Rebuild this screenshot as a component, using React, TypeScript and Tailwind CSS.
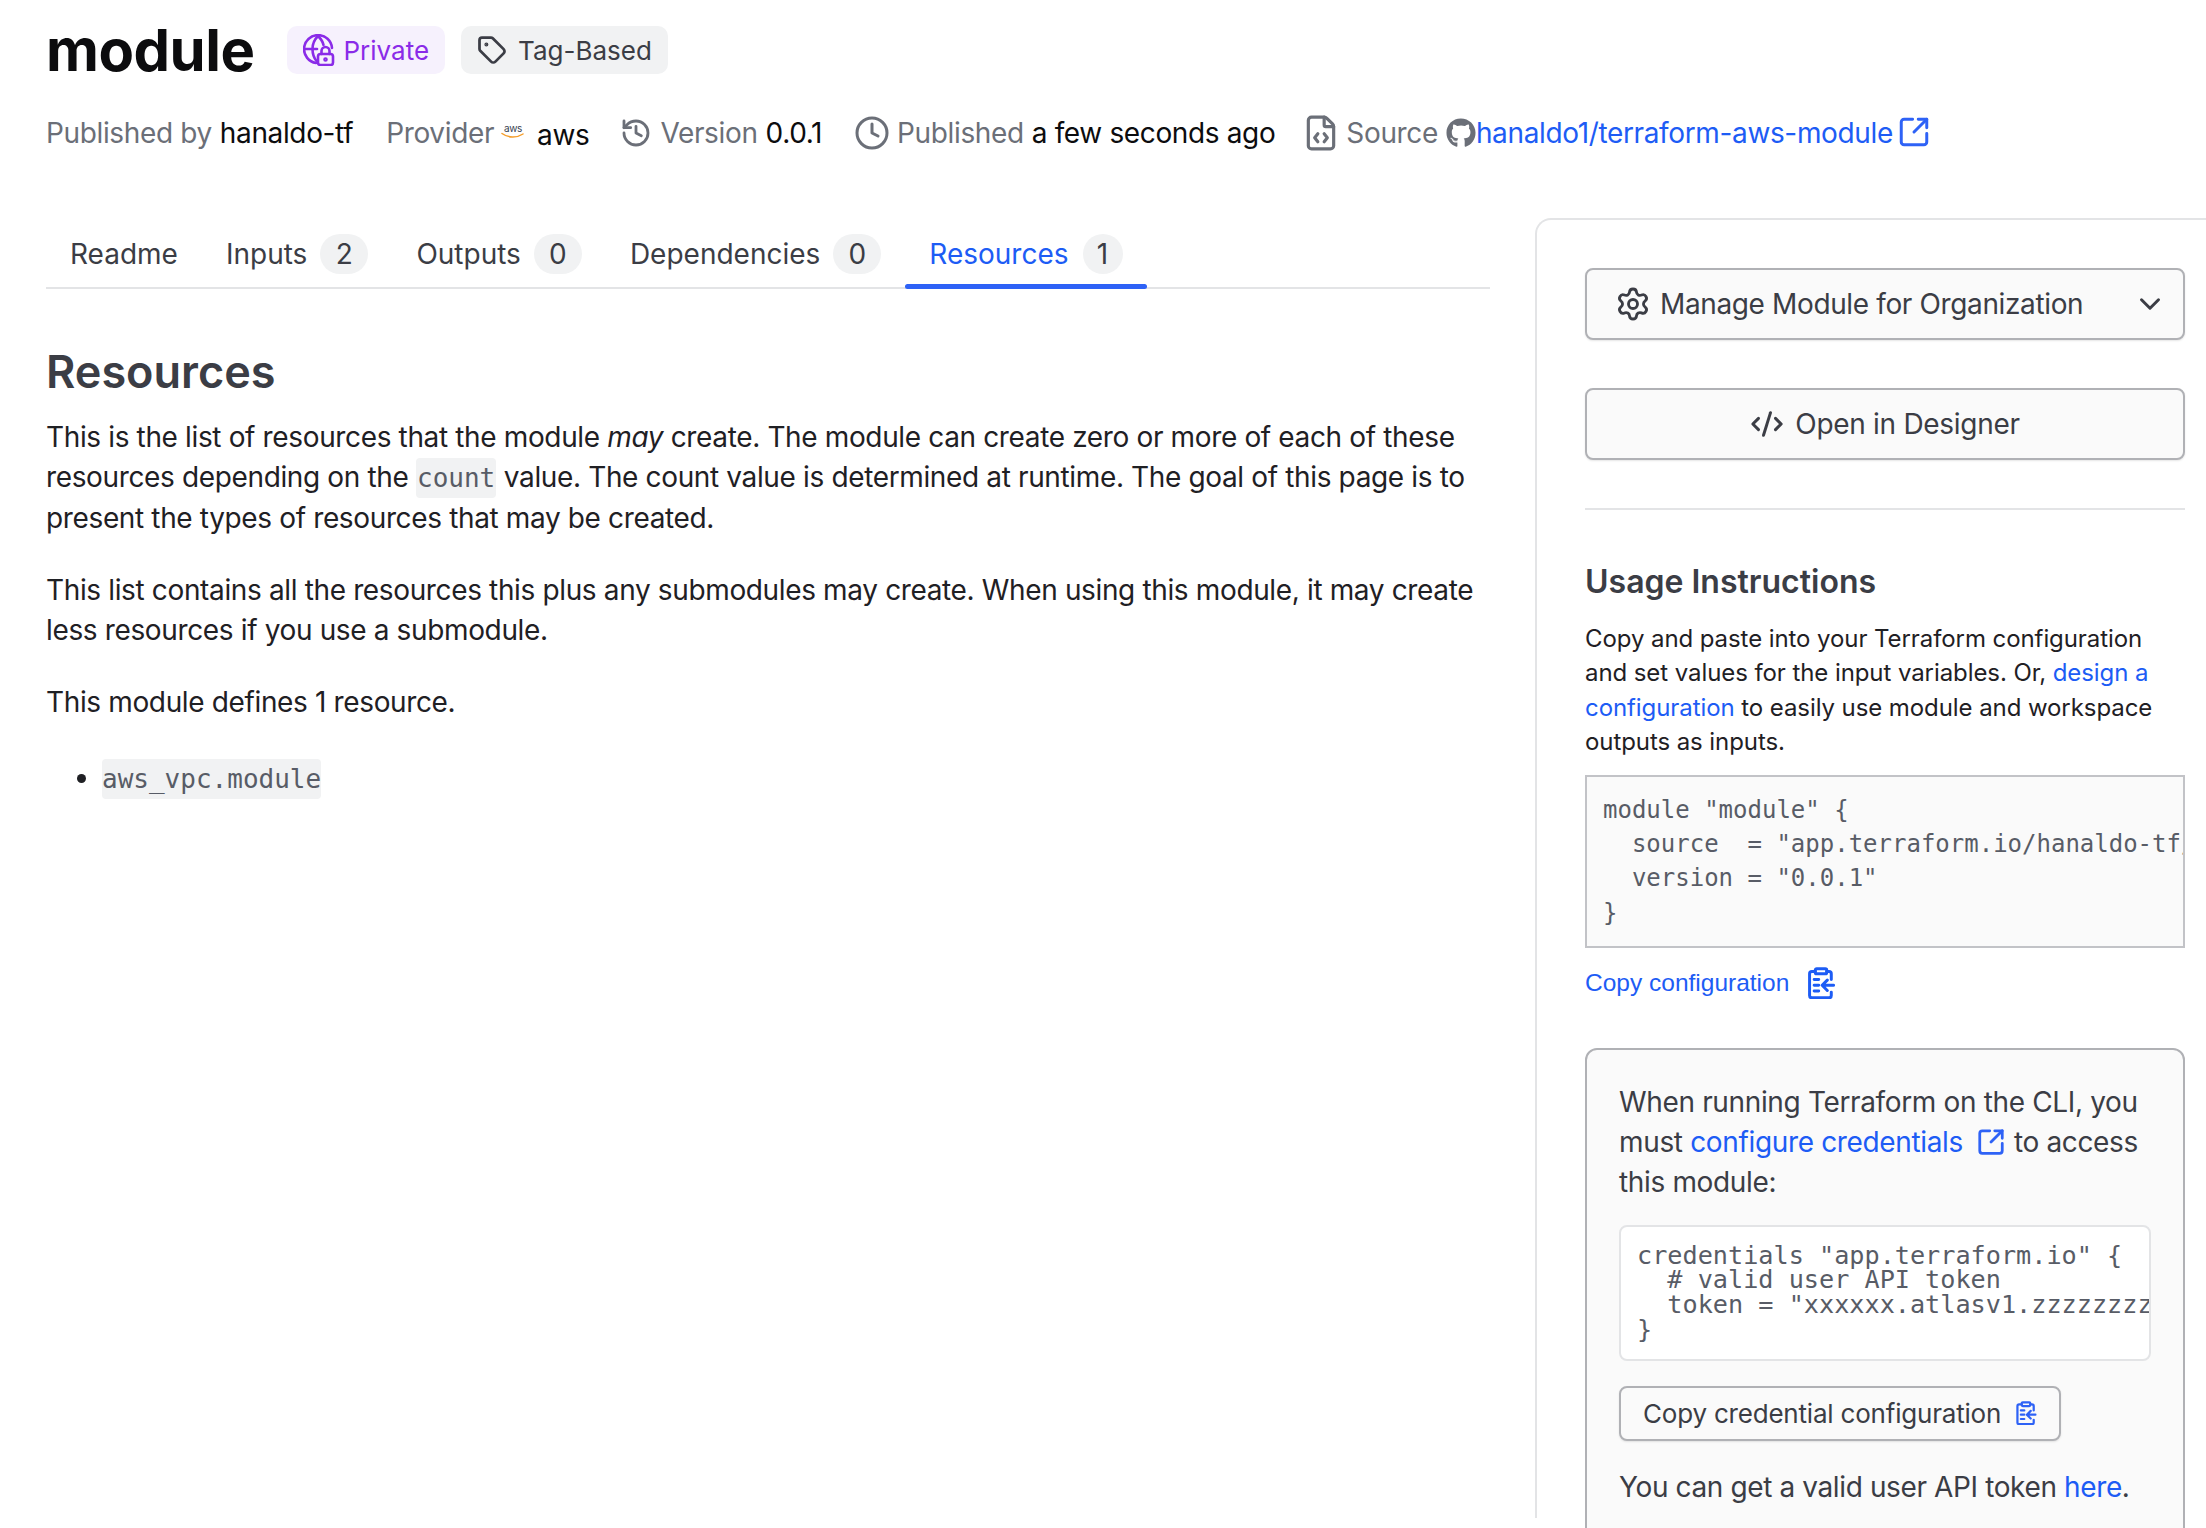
import { ChevronDown, Clock, CodeXml, FileCode, History, Settings, SquareArrowOutUpRight, Tag } from "lucide-react";
import { FaGithub } from "react-icons/fa";

const INTER = "font-['Inter',sans-serif]";
const MONO = "font-['DejaVu_Sans_Mono',monospace]";

function GlobePadlock() {
  return (
    <svg viewBox="0 0 32 32" fill="none" stroke="currentColor" strokeWidth="2.6" strokeLinecap="round" strokeLinejoin="round" className="h-[32px] w-[32px]">
      <path d="M29 14A14 14 0 1 0 13 29" />
      <path d="M15 2c-4 4-5.5 8-5.5 13s1.500 9 4 12" />
      <path d="M15 2c3 3 5 6 5.500 9" />
      <path d="M2 15h12" />
      <rect x="15" y="20" width="15" height="11" rx="2.5" />
      <path d="M18.500 20v-3a4 4 0 0 1 8 0v3" />
      <circle cx="22.500" cy="25.500" r="1" />
    </svg>
  );
}

function ClipboardCopy({ className }: { className?: string }) {
  return (
    <svg viewBox="0 0 24 28" fill="none" stroke="currentColor" strokeWidth="2.6" strokeLinecap="round" strokeLinejoin="round" className={className}>
      <rect x="7" y="1.5" width="10" height="4.5" rx="1.2" />
      <path d="M7 4H4a2 2 0 0 0-2 2v19a2 2 0 0 0 2 2h15a2 2 0 0 0 2-2v-3" />
      <path d="M17 4h2a2 2 0 0 1 2 2v5" />
      <path d="M6 11h4M6 16h4M6 21h4" />
      <path d="M23 16h-9M17.5 11.5 13 16l4.5 4.5" />
    </svg>
  );
}

function AwsLogo() {
  return (
    <svg viewBox="0 0 24 16" className="ml-[7px] mr-[12px] h-[16px] w-[24px] -translate-y-[2px]">
      <text x="12" y="9" textAnchor="middle" fontSize="10" fontFamily="Inter, sans-serif" fill="#374151">aws</text>
      <path d="M1 10.5c6 4.5 15 4.5 21 0.5" fill="none" stroke="#f59e2c" strokeWidth="1.5" strokeLinecap="round" />
    </svg>
  );
}

function MetaLabel({ children }: { children: React.ReactNode }) {
  return <span className="text-[#6b6f78]">{children}</span>;
}

function Tabs() {
  const tabs = [
    { label: "Readme" },
    { label: "Inputs", count: 2 },
    { label: "Outputs", count: 0 },
    { label: "Dependencies", count: 0 },
    { label: "Resources", count: 1, active: true },
  ];
  return (
    <div className="flex h-[68px] border-b-2 border-[#e3e4e6] text-[28px]">
      {tabs.map((t) => (
        <div key={t.label} className={"relative flex h-[66px] items-center px-[24px] " + (t.active ? "text-[#1d5cf5]" : "text-[#3b3d45]")}>
          {t.label}
          {t.count !== undefined && (
            <span className={"flex h-[40px] items-center justify-center rounded-full bg-[#f1f2f3] text-[#3b3d45] " + (t.active ? "ml-[14px] w-[40px]" : "ml-[13px] w-[48px]")}>
              {t.count}
            </span>
          )}
          {t.active && <div className="absolute inset-x-0 -bottom-[2px] h-[5px] rounded-full bg-[#2e62f6]" />}
        </div>
      ))}
    </div>
  );
}

function Sidebar() {
  return (
    <aside className="ml-[45px] mt-[61px] h-[1300px] w-[671px] shrink-0 rounded-tl-[16px] border-l-2 border-t-2 border-[#e3e4e6] pl-[48px] pt-[48px]">
      <div className="w-[600px]">
        <button className="flex h-[72px] w-full items-center rounded-[8px] border-2 border-[#b0b1b5] bg-[#fafafa] pl-[28px] pr-[16px] text-[28px] tracking-[-0.37px] text-[#3b3d45] shadow-[0_1px_2px_rgba(0,0,0,0.1)]">
          <Settings size={36} strokeWidth={1.9} />
          <span className="ml-[9px] flex-1 text-left">Manage Module for Organization</span>
          <ChevronDown size={34} strokeWidth={2.1} />
        </button>
        <button className="mt-[48px] flex h-[72px] w-full items-center justify-center rounded-[8px] border-2 border-[#b0b1b5] bg-[#fafafa] text-[28px] tracking-[-0.3px] text-[#3b3d45] shadow-[0_1px_2px_rgba(0,0,0,0.1)]">
          <CodeXml size={34} strokeWidth={2.1} />
          <span className="ml-[11px]">Open in Designer</span>
        </button>
        <div className="mt-[48px] h-[2px] bg-[#e3e4e6]" />

        <h3 className="mt-[52px] text-[32px] font-semibold leading-[40px] text-[#3b3d45]">Usage Instructions</h3>
        <p className="mt-[20px] text-[24px] leading-[34.4px] tracking-[-0.08px] text-[#1f2024]">
          Copy and paste into your Terraform configuration and set values for the input variables. Or,{" "}
          <span className="text-[#1d5cf5]">design a configuration</span> to easily use module and workspace outputs as inputs.
        </p>
        <pre className={`mt-[15px] h-[173px] overflow-hidden border-2 border-[#c2c3c7] bg-[#fafafa] p-[16px] text-[24px] leading-[34.4px] text-[#585c66] ${MONO}`}>
          {`module "module" {\n  source  = "app.terraform.io/hanaldo-tf/module/aws"\n  version = "0.0.1"\n}`}
        </pre>
        <div className="mt-[18px] flex items-center font-['Liberation_Sans',sans-serif] text-[24.5px] leading-[34px] text-[#1d5cf5]">
          Copy configuration
          <ClipboardCopy className="ml-[18px] h-[32px] w-[28px]" />
        </div>

        <div className="mt-[48px] h-[600px] rounded-[12px] border-2 border-[#b0b1b5] bg-[#fafafa] px-[32px] pt-[32px]">
          <p className="text-[28px] leading-[40px] tracking-[-0.35px] text-[#3b3d45]">
            When running Terraform on the CLI, you must <span className="text-[#1d5cf5]">configure credentials</span>
            <SquareArrowOutUpRight size={30} strokeWidth={2.2} className="ml-[13px] mr-[8px] inline -translate-y-[2px] text-[#2e62f6]" />
            to access this module:
          </p>
          <pre className={`mt-[23px] h-[136px] overflow-hidden rounded-[8px] border-2 border-[#e3e4e6] bg-white px-[16px] pt-[17px] text-[25.2px] leading-[24.8px] text-[#585c66] ${MONO}`}>
            {`credentials "app.terraform.io" {\n  # valid user API token\n  token = "xxxxxx.atlasv1.zzzzzzzzzzzzz"\n}`}
          </pre>
          <button className="mt-[25px] flex h-[55px] items-center rounded-[8px] border-2 border-[#b0b1b5] bg-[#fafafa] px-[22px] text-[26px] tracking-[-0.2px] text-[#3b3d45] shadow-[0_1px_2px_rgba(0,0,0,0.1)]">
            Copy credential configuration
            <ClipboardCopy className="ml-[14px] h-[24px] w-[22px] text-[#2e62f6]" />
          </button>
          <p className="mt-[26px] text-[28px] leading-[40px] tracking-[-0.38px] text-[#3b3d45]">
            You can get a valid user API token <span className="text-[#1d5cf5]">here</span>.
          </p>
        </div>
      </div>
    </aside>
  );
}

export default function App() {
  return (
    <div className={`h-[1528px] w-[2206px] overflow-hidden bg-white ${INTER}`}>
      <div className="px-[46px] pt-[22px]">
        <div className="flex items-center">
          <h1 className="text-[58px] font-bold leading-[56px] tracking-[-0.5px] text-[#0c0c0e]">module</h1>
          <span className="ml-[33px] flex h-[48px] items-center rounded-[10px] bg-[#f6f1fd] px-[16px] text-[26px] text-[#8a2be8]">
            <GlobePadlock />
            <span className="ml-[8px]">Private</span>
          </span>
          <span className="ml-[16px] flex h-[48px] items-center rounded-[10px] bg-[#f1f2f3] px-[16px] text-[26px] text-[#3b3d45]">
            <Tag size={30} strokeWidth={2.2} />
            <span className="ml-[11px]">Tag-Based</span>
          </span>
        </div>
        <div className="mt-[31px] flex h-[48px] items-center text-[28px] tracking-[-0.36px] text-[#0c0c0e]">
          <MetaLabel>Published by</MetaLabel>
          <span className="ml-[8px]">hanaldo-tf</span>
          <span className="ml-[33px]"><MetaLabel>Provider</MetaLabel></span>
          <AwsLogo />
          <span className="translate-y-[2px]">aws</span>
          <History size={32} strokeWidth={2.1} className="ml-[31px] text-[#6b6f78]" />
          <span className="ml-[8px]"><MetaLabel>Version</MetaLabel></span>
          <span className="ml-[8px]">0.0.1</span>
          <Clock size={36} strokeWidth={2} className="ml-[32px] text-[#6b6f78]" />
          <span className="ml-[7px]"><MetaLabel>Published</MetaLabel></span>
          <span className="ml-[8px]">a few seconds ago</span>
          <FileCode size={38} strokeWidth={2} className="ml-[27px] text-[#6b6f78]" />
          <span className="ml-[6px]"><MetaLabel>Source</MetaLabel></span>
          <FaGithub size={30} className="ml-[8px] text-[#6b6f78]" />
          <span className="text-[#1d5cf5]">hanaldo1/terraform-aws-module</span>
          <SquareArrowOutUpRight size={34} strokeWidth={2.1} className="ml-[4px] -translate-y-[1px] text-[#2e62f6]" />
        </div>
      </div>

      <div className="flex pl-[46px]">
        <main className="w-[1444px] shrink-0 pt-[64px]">
          <Tabs />
          <h2 className="mt-[53px] text-[45px] font-semibold leading-[60px] text-[#3b3d45]">Resources</h2>
          <div className="mt-[15px] text-[28px] leading-[40px] tracking-[-0.36px] text-[#1f2024]">
            <p>
              This is the list of resources that the module <em>may</em> create. The module can create zero or more of each of these resources depending on the{" "}
              <code className={`rounded-[4px] bg-[#f1f2f3] px-[1px] py-[5px] text-[26px] tracking-normal text-[#585c66] ${MONO}`}>count</code> value. The count value is determined at runtime. The goal of this page is to present the types of resources that may be created.
            </p>
            <p className="mt-[32px]">
              This list contains all the resources this plus any submodules may create. When using this module, it may create less resources if you use a submodule.
            </p>
            <p className="mt-[32px]">This module defines 1 resource.</p>
            <ul className="mt-[36px] list-disc pl-[56px]">
              <li>
                <code className={`rounded-[4px] bg-[#f1f2f3] py-[5px] text-[26px] tracking-normal text-[#585c66] ${MONO}`}>aws_vpc.module</code>
              </li>
            </ul>
          </div>
        </main>
        <Sidebar />
      </div>
    </div>
  );
}
